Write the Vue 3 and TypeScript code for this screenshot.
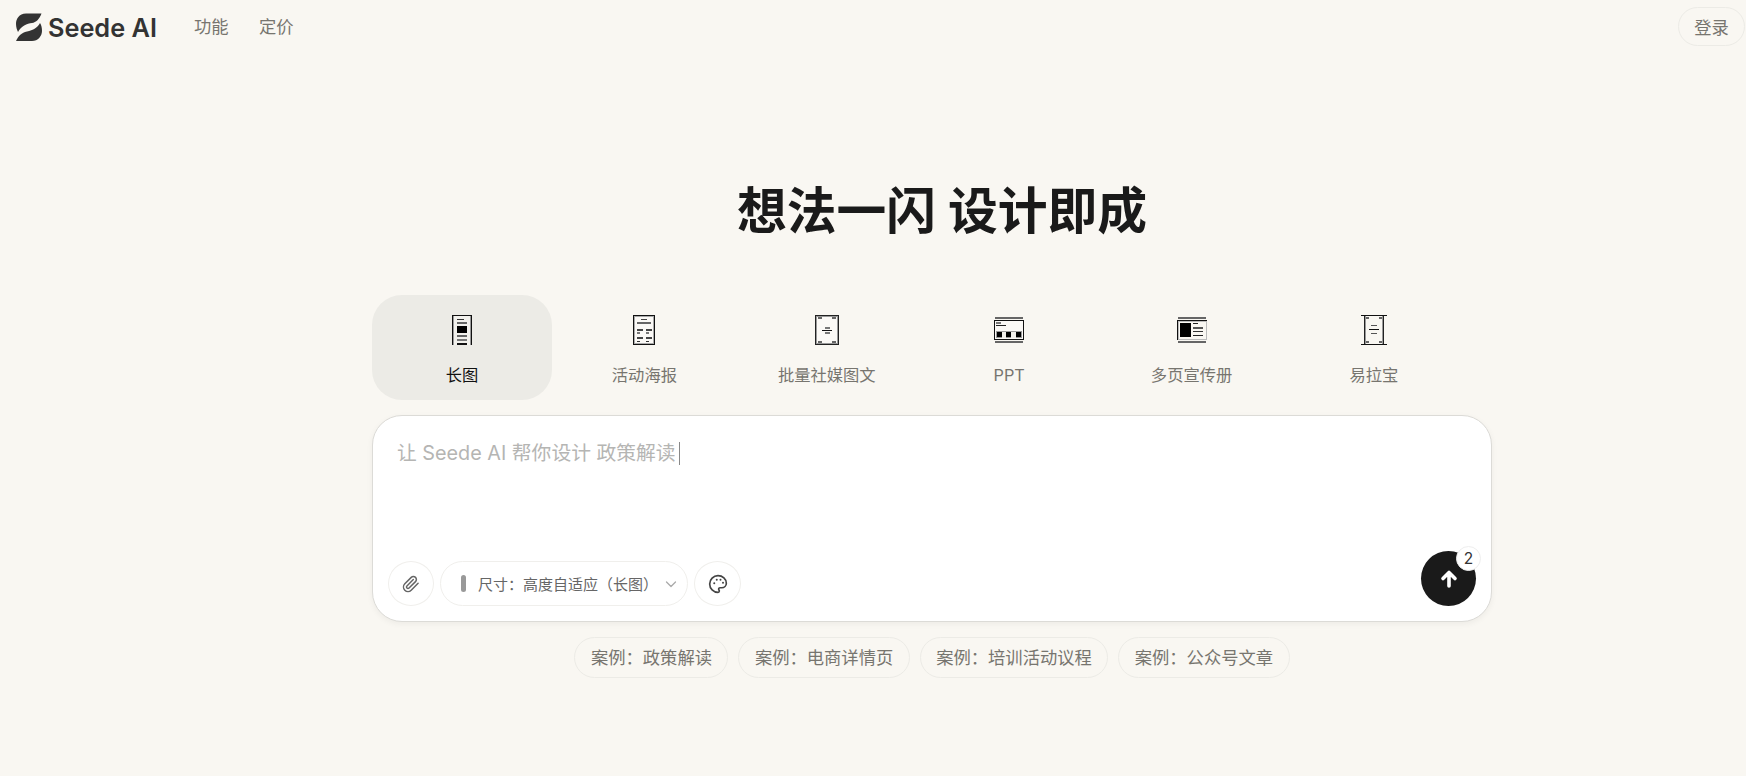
<script setup lang="ts">
interface Tab { label: string; active?: boolean; icon: string }
const tabs: Tab[] = [
  { label: '长图', active: true, icon: 'long' },
  { label: '活动海报', icon: 'poster' },
  { label: '批量社媒图文', icon: 'social' },
  { label: 'PPT', icon: 'ppt' },
  { label: '多页宣传册', icon: 'brochure' },
  { label: '易拉宝', icon: 'banner' },
]
const chips: string[] = ['案例：政策解读', '案例：电商详情页', '案例：培训活动议程', '案例：公众号文章']
</script>

<template>
  <div class="page">
    <header class="header">
      <div class="brand">
        <svg class="logo" width="28" height="30" viewBox="14 12 28 30">
          <path d="M41.500 13.500H26C19 13.500 16 19 16 24C16 27 17 30 18 32C21 26 27 23.500 32 23C36 22.500 39.500 19 41.500 13.500Z" fill="#333" />
          <path d="M16 41H32C38 41 42 36 42 31C42 28 41.500 25 40 23C38 27 33 30.500 27 31.500C21.500 32.500 18.500 36 16 41Z" fill="#333" />
        </svg>
        <span class="brand-name">Seede AI</span>
      </div>
      <nav class="nav">
        <span>功能</span>
        <span>定价</span>
      </nav>
      <button class="login">登录</button>
    </header>

    <main class="main">
      <h1 class="title">想法一闪 设计即成</h1>

      <div class="tabs">
        <div v-for="t in tabs" :key="t.label" class="tab" :class="{ active: t.active }">
          <svg class="tab-icon" width="32" height="32" viewBox="0 0 32 32" shape-rendering="crispEdges">
            <template v-if="t.icon === 'long'">
              <path d="M6 1H26V31H25V2H7V31H6Z" fill="#111" />
              <rect x="7" y="2" width="1" height="29" fill="#999" />
              <rect x="24" y="2" width="1" height="29" fill="#999" />
              <rect x="8" y="2" width="16" height="29" fill="#fff" fill-opacity=".3" />
              <rect x="11" y="5" width="7" height="1" fill="#333" />
              <rect x="11" y="8" width="10" height="2" fill="#666" />
              <rect x="11" y="12" width="10" height="7" fill="#000" />
              <rect x="11" y="21" width="10" height="2" fill="#666" />
              <rect x="11" y="25" width="10" height="2" fill="#777" />
              <rect x="11" y="29" width="10" height="2" fill="#111" />
            </template>
            <template v-else-if="t.icon === 'poster'">
              <rect x="5.500" y="1.500" width="21" height="29" fill="#fff" fill-opacity=".3" stroke="#111" />
              <rect x="6.500" y="2.500" width="19" height="27" fill="none" stroke="#aaa" />
              <rect x="13" y="5" width="6" height="1" fill="#444" />
              <rect x="9" y="8" width="14" height="2" fill="#666" />
              <rect x="9" y="15" width="6" height="2" fill="#444" />
              <rect x="18" y="15" width="6" height="2" fill="#444" />
              <rect x="9" y="18" width="3" height="2" fill="#777" />
              <rect x="18" y="18" width="3" height="2" fill="#777" />
              <rect x="9" y="23" width="6" height="2" fill="#444" />
              <rect x="18" y="23" width="6" height="2" fill="#444" />
              <rect x="9" y="27" width="3" height="1" fill="#333" />
              <rect x="18" y="27" width="3" height="1" fill="#333" />
            </template>
            <template v-else-if="t.icon === 'social'">
              <rect x="4.500" y="1.500" width="23" height="29" fill="#fff" fill-opacity=".3" stroke="#222" />
              <rect x="5.500" y="2.500" width="21" height="27" fill="none" stroke="#999" />
              <rect x="7" y="3" width="4" height="2" fill="#666" />
              <rect x="21" y="3" width="4" height="2" fill="#666" />
              <rect x="7" y="27" width="4" height="2" fill="#666" />
              <rect x="21" y="27" width="4" height="2" fill="#666" />
              <rect x="14" y="13" width="5" height="2" fill="#777" />
              <rect x="11" y="16" width="10" height="1" fill="#111" />
              <rect x="14" y="18" width="5" height="2" fill="#777" />
            </template>
            <template v-else-if="t.icon === 'ppt'">
              <rect x="2" y="3" width="28" height="2" fill="#666" />
              <rect x="2" y="27" width="28" height="2" fill="#666" />
              <rect x="1" y="7" width="30" height="19" fill="#fff" fill-opacity=".3" />
              <path d="M1 6H31V26H1ZM2 7V25H30V7Z" fill="#111" />
              <rect x="3" y="8" width="5" height="2" fill="#777" />
              <rect x="3" y="11" width="10" height="1" fill="#222" />
              <rect x="3" y="17" width="26" height="7" fill="#999" />
              <rect x="4" y="18" width="5" height="5" fill="#000" />
              <rect x="13" y="18" width="5" height="5" fill="#000" />
              <rect x="23" y="18" width="5" height="5" fill="#000" />
              <rect x="9" y="18" width="4" height="6" fill="#f0efea" />
              <rect x="18" y="18" width="5" height="6" fill="#f0efea" />
            </template>
            <template v-else-if="t.icon === 'brochure'">
              <rect x="2" y="3" width="28" height="2" fill="#666" />
              <rect x="2" y="27" width="28" height="2" fill="#666" />
              <path d="M1 6H31V26H1ZM2 7V25H30V7Z" fill="#111" />
              <rect x="2" y="7" width="28" height="18" fill="none" stroke="#bbb" stroke-width="1" />
              <rect x="4" y="9" width="11" height="14" fill="#000" />
              <rect x="17" y="9" width="5" height="1" fill="#222" />
              <rect x="17" y="13" width="10" height="2" fill="#555" />
              <rect x="17" y="17" width="10" height="1" fill="#333" />
              <rect x="17" y="21" width="10" height="1" fill="#222" />
            </template>
            <template v-else>
              <rect x="3" y="1" width="26" height="1" fill="#111" />
              <rect x="3" y="30" width="26" height="1" fill="#111" />
              <rect x="6" y="2" width="1" height="28" fill="#222" />
              <rect x="7" y="2" width="1" height="28" fill="#999" />
              <rect x="24" y="2" width="1" height="28" fill="#999" />
              <rect x="25" y="2" width="1" height="28" fill="#222" />
              <rect x="8" y="3" width="3" height="2" fill="#666" />
              <rect x="21" y="3" width="3" height="2" fill="#666" />
              <rect x="8" y="27" width="3" height="2" fill="#666" />
              <rect x="21" y="27" width="3" height="2" fill="#666" />
              <rect x="13" y="11" width="6" height="1" fill="#555" />
              <rect x="11" y="15" width="10" height="1" fill="#111" />
              <rect x="13" y="19" width="6" height="1" fill="#555" />
            </template>
          </svg>
          <span class="tab-label">{{ t.label }}</span>
        </div>
      </div>

      <section class="box">
        <div class="prompt">让 Seede AI 帮你设计 政策解读<i class="caret"></i></div>
        <div class="controls">
          <button class="circle">
            <svg width="18" height="18" viewBox="0 0 24 24" fill="none" stroke="#666" stroke-width="2" stroke-linecap="round" stroke-linejoin="round">
              <path d="m21.440 11.050-9.190 9.190a6 6 0 0 1-8.490-8.490l8.570-8.570A4 4 0 1 1 18 8.840l-8.590 8.570a2 2 0 0 1-2.830-2.830l8.490-8.480" />
            </svg>
          </button>
          <button class="size">
            <i class="bar"></i>
            <span class="size-text">尺寸：高度自适应（长图）</span>
            <svg class="chev" width="14" height="14" viewBox="0 0 14 14" fill="none" stroke="#aaa" stroke-width="1.300" stroke-linecap="round" stroke-linejoin="round">
              <path d="M2.500 5l4.500 4.500L11.500 5" />
            </svg>
          </button>
          <button class="circle palette">
            <svg width="20" height="20" viewBox="0 0 24 24" fill="none" stroke="#444" stroke-width="2" stroke-linecap="round" stroke-linejoin="round">
              <path d="M12 2C6.500 2 2 6.500 2 12s4.500 10 10 10c1 0 1.600-.700 1.600-1.600 0-.400-.200-.800-.400-1.100-.300-.300-.400-.600-.400-1.100a1.600 1.600 0 0 1 1.700-1.700h2c3 0 5.500-2.500 5.500-5.500C22 6 17.500 2 12 2Z" />
              <circle cx="7.500" cy="11" r="1.200" fill="#444" stroke="none" />
              <circle cx="10.500" cy="7" r="1.200" fill="#444" stroke="none" />
              <circle cx="15" cy="6.800" r="1.200" fill="#444" stroke="none" />
              <circle cx="18" cy="10.500" r="1.200" fill="#444" stroke="none" />
            </svg>
          </button>
          <div class="send">
            <svg width="20" height="20" viewBox="0 0 20 20" fill="none" stroke="#fff" stroke-width="3.600" stroke-linecap="round" stroke-linejoin="round">
              <path d="M10 17V4M4 9.500 10 3.500l6 6" />
            </svg>
            <span class="badge">2</span>
          </div>
        </div>
      </section>

      <div class="chips">
        <span v-for="c in chips" :key="c" class="chip">{{ c }}</span>
      </div>
    </main>
  </div>
</template>

<style>
html, body { margin: 0; background: #f9f7f2; }
</style>

<style scoped>
.page {
  height: 776px;
  overflow: hidden;
  background: #f9f7f2;
  font-family: Inter, "Noto Sans CJK SC", sans-serif;
  color: #1a1a1a;
}
.header {
  display: flex;
  align-items: center;
  height: 53px;
  padding: 0 1px 0 16px;
}
.brand { display: flex; align-items: center; gap: 6px; width: 178px; }
.logo { flex: none; margin-left: -2px; }
.brand-name { font-size: 25.300px; font-weight: 600; color: #333; padding-top: 1px; margin-bottom: -1px; }
.nav { display: flex; gap: 30.500px; font-size: 17.300px; color: #77756f; margin-bottom: 3px; }
.login {
  margin-left: auto;
  width: 67px;
  height: 39px;
  border: 1px solid #ecebe6;
  border-radius: 20px;
  background: transparent;
  font: inherit;
  font-size: 17.300px;
  color: #77756f;
  padding: 0;
  margin-bottom: 1px;
}
.main { padding: 126px 0 0 372px; width: 1120px; }
.title {
  margin: 0;
  padding-left: 20px;
  text-align: center;
  font-size: 49.800px;
  line-height: 64px;
  font-weight: 700;
  color: #1a1a1a;
}
.tabs { display: flex; gap: 2.400px; margin-top: 52px; }
.tab {
  flex: none;
  width: 180px;
  height: 105px;
  border-radius: 30px;
  display: flex;
  flex-direction: column;
  align-items: center;
  box-sizing: border-box;
  padding-top: 19px;
}
.tab.active { background: #ecebe6; }
.tab-icon { flex: none; }
.tab-label {
  margin-top: 17px;
  font-size: 16.300px;
  line-height: 24px;
  color: #77756f;
}
.tab.active .tab-label { color: #111; }
.box {
  box-sizing: border-box;
  margin-top: 15px;
  height: 207px;
  border: 1px solid #dcdbd7;
  border-radius: 30px;
  background: #fff;
  box-shadow: 0 2px 6px rgba(0, 0, 0, 0.05);
  padding: 23px 15px 15px;
  display: flex;
  flex-direction: column;
}
.prompt {
  padding-left: 9px;
  font-size: 19.800px;
  line-height: 28px;
  color: #b5b5b3;
  display: flex;
  align-items: center;
}
.caret { display: inline-block; width: 1px; height: 23px; background: #888; margin-left: 3px; }
.controls {
  margin-top: auto;
  display: flex;
  align-items: flex-end;
  gap: 6px;
  position: relative;
}
.circle {
  width: 46px;
  height: 45px;
  border: 1px solid #f0efec;
  border-radius: 50%;
  background: #fff;
  display: flex;
  align-items: center;
  justify-content: center;
  padding: 0;
}
.palette { width: 47px; }
.size {
  width: 248px;
  height: 45px;
  border: 1px solid #f0efec;
  border-radius: 23px;
  background: #fff;
  display: flex;
  align-items: center;
  padding: 0 9px 0 20px;
  font: inherit;
  color: #666;
}
.bar { width: 5px; height: 17px; border-radius: 3px; background: #999; flex: none; }
.size-text { margin-left: 12px; font-size: 15px; color: #666; white-space: nowrap; }
.chev { margin-left: auto; flex: none; }
.send {
  margin-left: auto;
  width: 55px;
  height: 55px;
  border-radius: 50%;
  background: #1a1a1a;
  display: flex;
  align-items: center;
  justify-content: center;
  position: relative;
}
.badge {
  position: absolute;
  top: -5px;
  right: -5px;
  box-sizing: border-box;
  width: 25px;
  height: 25px;
  border-radius: 50%;
  background: #fff;
  border: 1px solid #eee;
  font-size: 15.500px;
  line-height: 23px;
  text-align: center;
  color: #333;
}
.chips {
  display: flex;
  justify-content: center;
  gap: 10px;
  margin-top: 15px;
}
.chip {
  box-sizing: border-box;
  height: 41px;
  line-height: 39px;
  padding: 0 15.500px;
  border: 1px solid #ecebe6;
  border-radius: 21px;
  font-size: 17.300px;
  color: #77756f;
  white-space: nowrap;
}
</style>
